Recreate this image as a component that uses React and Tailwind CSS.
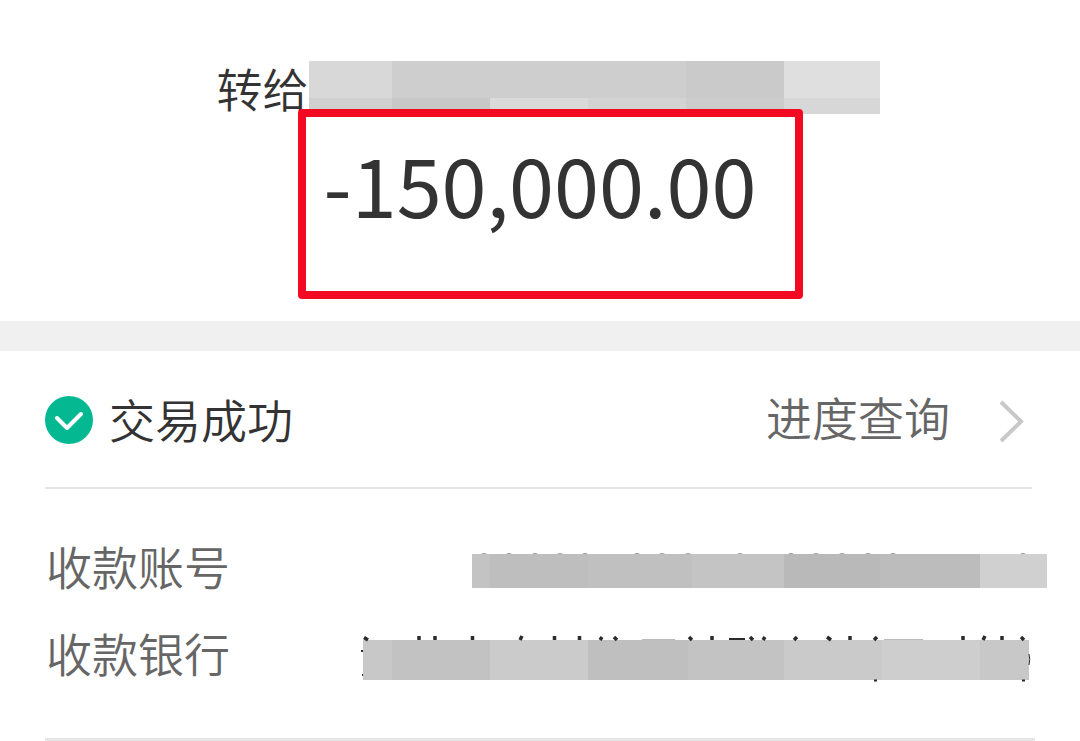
// App.jsx - transfer detail page

const payeeTop = [
  "w-[83px] bg-[#d8d8d8]",
  "w-[294px] bg-[#cecece]",
  "w-[98px] bg-[#cacaca]",
  "w-[96px] bg-[#dfdfdf]",
];

const payeeBottom = [
  "w-[83px] bg-[#d0d0d0]",
  "w-[98px] bg-[#c8c8c8]",
  "w-[98px] bg-[#dadada]",
  "w-[98px] bg-[#d3d3d3]",
  "w-[98px] bg-[#cccccc]",
  "w-[96px] bg-[#d7d7d7]",
];

const accountCells = [
  "w-[18px] bg-[#c3c3c3]",
  "w-[98px] bg-[#bebebe]",
  "w-[104px] bg-[#c0c0c0]",
  "w-[92px] bg-[#c4c4c4]",
  "w-[96px] bg-[#b9b9b9]",
  "w-[100px] bg-[#bcbcbc]",
  "w-[67px] bg-[#d0d0d0]",
];

const bankCells = [
  "w-[29px] bg-[#c8c8c8]",
  "w-[98px] bg-[#c2c2c2]",
  "w-[98px] bg-[#cbcbcb]",
  "w-[100px] bg-[#bfbfbf]",
  "w-[96px] bg-[#c3c3c3]",
  "w-[98px] bg-[#cacaca]",
  "w-[98px] bg-[#cecece]",
  "w-[49px] bg-[#c8c8c8]",
];

// tips of the digits that stick out over the account mask
const digitTips = [12, 37, 63, 88, 113, 165, 190, 216, 268, 319, 344, 370, 396, 421, 551];

function Cells({ cells, className }) {
  return (
    <div className={`flex ${className}`}>
      {cells.map((cell, i) => (
        <span key={i} className={cell} />
      ))}
    </div>
  );
}

function SuccessIcon() {
  return (
    <svg viewBox="0 0 48 48" className="size-12 shrink-0" aria-hidden="true">
      <circle cx="24" cy="24" r="24" fill="#04b992" />
      <path
        d="M12 22 L22 32 L36 18"
        fill="none"
        stroke="#fff"
        strokeWidth="4"
        strokeLinecap="round"
        strokeLinejoin="round"
      />
    </svg>
  );
}

function ChevronIcon() {
  return (
    <svg viewBox="0 0 28 44" className="mt-0.5 h-11 w-7 shrink-0" aria-hidden="true">
      <path d="M3 3 L23 22.500 L3 42" fill="none" stroke="#c8c8c8" strokeWidth="4" />
    </svg>
  );
}

export default function App() {
  return (
    <main className="bg-white font-['Noto_Sans_CJK_SC',sans-serif] text-[46px] leading-[60px] font-[350] text-[#333333]">
      {/* Payee + amount */}
      <header className="flex flex-col items-center pl-5 pt-[61px] pb-[22px]">
        <div className="flex h-[53px] items-center pr-1">
          <span className="pb-0.5 whitespace-nowrap">转给</span>
          <div>
            <Cells cells={payeeTop} className="h-[37px]" />
            <Cells cells={payeeBottom} className="h-4" />
          </div>
        </div>
        <div className="relative -mt-[5px] h-[190px] w-[505px] rounded border-8 border-[#f20a22] pt-[18px] pr-5 text-center">
          <p className="text-[81px] leading-[96px] font-normal">-150,000.00</p>
        </div>
      </header>

      <div className="h-[30px] bg-[#f0f0f0]" />

      {/* Status */}
      <section className="mr-12 ml-[45px] flex h-[138px] items-center justify-between border-b-2 border-[#e6e6e6] pt-0.5">
        <div className="flex items-center gap-4">
          <SuccessIcon />
          <h1 className="pb-1">交易成功</h1>
        </div>
        <a href="#progress" className="flex items-center gap-12 pr-1.5 text-[#666666]">
          <span className="pb-2">进度查询</span>
          <ChevronIcon />
        </a>
      </section>

      {/* Receiving account */}
      <dl className="pt-[46px] pb-14 pl-[46px]">
        <div className="mb-[27px] flex items-center justify-between pr-[33px]">
          <dt className="text-[#666666]">收款账号</dt>
          <dd className="relative mt-3">
            <Cells cells={accountCells} className="h-[34px]" />
            <svg viewBox="0 0 575 34" className="absolute inset-0 size-full overflow-visible" aria-hidden="true">
              {digitTips.map((x) => (
                <path key={x} d={`M${x - 3} 0 Q${x} -2 ${x + 3} 0 Z`} fill="#999" />
              ))}
            </svg>
          </dd>
        </div>
        <div className="flex items-center justify-between pr-[51px]">
          <dt className="text-[#666666]">收款银行</dt>
          <dd className="relative mt-4">
            <Cells cells={bankCells} className="h-10" />
            <svg
              viewBox="0 0 666 40"
              className="absolute inset-0 size-full overflow-visible"
              fill="none"
              stroke="#2b2b2b"
              strokeWidth="3.5"
              aria-hidden="true"
            >
              <path d="M56 -4V0 M72 -4V0 M109.500 -4V0 M191.500 -4V0 M216.500 -4V0 M349 -4V0 M487 -4V0 M600 -4V0 M639 -4V0" />
              <path d="M1 -2.500L5 0 M159 -4L157 0 M239 -3L237 0 M251 -3L254 0 M326 -3L329 0 M387 -3L390 0 M402 -3L400 0 M434 -3L431 0 M464 -3L468 0 M514 -3L511 0 M622 -4L620 0 M658 -3L661 0" />
              <path d="M366 -1H382" strokeWidth="2" />
              <path d="M279 -.5H312 M521 -.5H560" stroke="#bbb" strokeWidth="1" />
              <path d="M-2 11H0 M-1 35H0 M511 40.500H514 M659 40.500H662" strokeWidth="2" />
              <path d="M666 14Q667.500 19 666 25" strokeWidth="1" />
            </svg>
          </dd>
        </div>
      </dl>

      <hr className="mr-[45px] ml-[45px] border-t-[3px] border-[#e6e6e6]" />
    </main>
  );
}
